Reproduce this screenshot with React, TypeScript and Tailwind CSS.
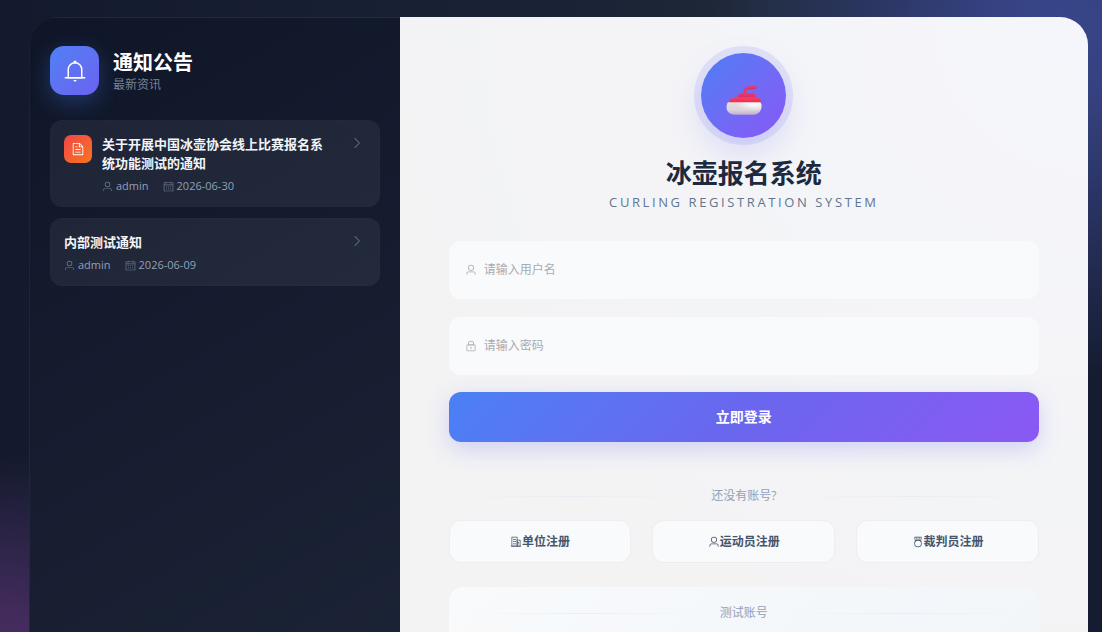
import type { ReactNode } from "react";

type IconProps = { className?: string };

function Icon({ className, children }: IconProps & { children: ReactNode }) {
  return (
    <svg viewBox="0 0 1024 1024" fill="currentColor" className={className} aria-hidden="true">
      {children}
    </svg>
  );
}

function BellIcon({ className }: IconProps) {
  return (
    <Icon className={className}>
      <path d="M512 64a64 64 0 0 1 64 64v64H448v-64a64 64 0 0 1 64-64z" />
      <path d="M256 768h512V448a256 256 0 1 0-512 0v320zm256-640a320 320 0 0 1 320 320v384H192V448a320 320 0 0 1 320-320z" />
      <path d="M96 768h832q32 0 32 32t-32 32H96q-32 0-32-32t32-32zm352 128h128a64 64 0 0 1-128 0z" />
    </Icon>
  );
}

function UserIcon({ className }: IconProps) {
  return (
    <Icon className={className}>
      <path d="M512 512a192 192 0 1 0 0-384 192 192 0 0 0 0 384zm0 64a256 256 0 1 1 0-512 256 256 0 0 1 0 512zm320 320v-96a96 96 0 0 0-96-96H288a96 96 0 0 0-96 96v96a32 32 0 1 1-64 0v-96a160 160 0 0 1 160-160h448a160 160 0 0 1 160 160v96a32 32 0 1 1-64 0z" />
    </Icon>
  );
}

function LockIcon({ className }: IconProps) {
  return (
    <Icon className={className}>
      <path d="M224 448a32 32 0 0 0-32 32v384a32 32 0 0 0 32 32h576a32 32 0 0 0 32-32V480a32 32 0 0 0-32-32H224zm0-64h576a96 96 0 0 1 96 96v384a96 96 0 0 1-96 96H224a96 96 0 0 1-96-96V480a96 96 0 0 1 96-96z" />
      <path d="M512 544a32 32 0 0 1 32 32v192a32 32 0 1 1-64 0V576a32 32 0 0 1 32-32zm192-160v-64a192 192 0 1 0-384 0v64h384zM512 64a256 256 0 0 1 256 256v128H256V320A256 256 0 0 1 512 64z" />
    </Icon>
  );
}

function CalendarIcon({ className }: IconProps) {
  return (
    <Icon className={className}>
      <path d="M128 384v512h768V192H768v32a32 32 0 1 1-64 0v-32H320v32a32 32 0 0 1-64 0v-32H128v128h768v64H128zm192-256h384V96a32 32 0 1 1 64 0v32h160a32 32 0 0 1 32 32v768a32 32 0 0 1-32 32H96a32 32 0 0 1-32-32V160a32 32 0 0 1 32-32h160V96a32 32 0 0 1 64 0v32zm-32 384h64a32 32 0 0 1 0 64h-64a32 32 0 0 1 0-64zm0 192h64a32 32 0 1 1 0 64h-64a32 32 0 1 1 0-64zm192-192h64a32 32 0 0 1 0 64h-64a32 32 0 0 1 0-64zm0 192h64a32 32 0 1 1 0 64h-64a32 32 0 1 1 0-64zm192-192h64a32 32 0 1 1 0 64h-64a32 32 0 1 1 0-64zm0 192h64a32 32 0 1 1 0 64h-64a32 32 0 1 1 0-64z" />
    </Icon>
  );
}

function DocumentIcon({ className }: IconProps) {
  return (
    <Icon className={className}>
      <path d="M832 384H576V128H192v768h640V384zm-26.496-64L640 154.496V320h165.504zM160 64h480l256 256v608a32 32 0 0 1-32 32H160a32 32 0 0 1-32-32V96a32 32 0 0 1 32-32zm160 448h384v64H320v-64zm0-192h160v64H320v-64zm0 384h384v64H320v-64z" />
    </Icon>
  );
}

function OfficeIcon({ className }: IconProps) {
  return (
    <Icon className={className}>
      <path d="M192 128v704h384V128H192zm-32-64h448a32 32 0 0 1 32 32v768a32 32 0 0 1-32 32H160a32 32 0 0 1-32-32V96a32 32 0 0 1 32-32z" />
      <path d="M256 256h256v64H256v-64zm0 192h256v64H256v-64zm0 192h256v64H256v-64zm384-128h128v64H640v-64zm0 128h128v64H640v-64zM64 832h896v64H64v-64z" />
      <path d="M640 384v448h192V384H640zm-32-64h256a32 32 0 0 1 32 32v512a32 32 0 0 1-32 32H608a32 32 0 0 1-32-32V352a32 32 0 0 1 32-32z" />
    </Icon>
  );
}

function MedalIcon({ className }: IconProps) {
  return (
    <Icon className={className}>
      <path d="M512 896a256 256 0 1 0 0-512 256 256 0 0 0 0 512zm0 64a320 320 0 1 1 0-640 320 320 0 0 1 0 640z" />
      <path d="M576 128H448v200a286.72 286.72 0 0 1 64-8c19.52 0 40.832 2.688 64 8V128zm64 0v219.648c24.448 9.088 50.56 20.416 78.4 33.92L757.44 128H640zm-256 0H266.624l39.04 253.568c27.84-13.504 53.888-24.832 78.336-33.92V128zM229.312 64h565.376a32 32 0 0 1 31.616 36.864L768 480c-113.792-64-199.104-96-256-96-56.896 0-142.208 32-256 96l-58.304-379.136A32 32 0 0 1 229.312 64z" />
    </Icon>
  );
}

function ArrowRightIcon({ className }: IconProps) {
  return (
    <Icon className={className}>
      <path d="M340.864 149.312a30.592 30.592 0 0 0 0 42.752L652.736 512 340.864 831.872a30.592 30.592 0 0 0 0 42.752 29.12 29.12 0 0 0 41.728 0L714.24 534.336a32 32 0 0 0 0-44.672L382.592 149.376a29.12 29.12 0 0 0-41.728 0z" />
    </Icon>
  );
}

function CurlingStone({ className }: IconProps) {
  return (
    <svg viewBox="0 0 36 32" className={className} aria-hidden="true">
      <defs>
        <linearGradient id="stone" x1="0" y1="0" x2="0" y2="1">
          <stop offset="0" stopColor="#e6dfe4" />
          <stop offset="0.65" stopColor="#ddd3dc" />
          <stop offset="1" stopColor="#c0aecd" />
        </linearGradient>
        <radialGradient id="shine" cx="0.78" cy="0.2" r="0.5">
          <stop offset="0" stopColor="#ffffff" />
          <stop offset="1" stopColor="#ffffff" stopOpacity="0" />
        </radialGradient>
        <linearGradient id="cap" x1="0" y1="0" x2="0" y2="1">
          <stop offset="0" stopColor="#e5336a" />
          <stop offset="0.5" stopColor="#f43c62" />
          <stop offset="1" stopColor="#ee3050" />
        </linearGradient>
      </defs>
      <path d="M2.8 17.5h30.4c1.6 1 2.3 2.3 2.3 4.2 0 5.4-3.2 9-8.3 9H8.8c-5.1 0-8.3-3.2-8.3-7.4 0-2.7.7-4.6 2.3-5.8z" fill="url(#stone)" />
      <path d="M2.8 17.5h30.4c1.6 1 2.3 2.3 2.3 4.2 0 5.4-3.2 9-8.3 9H8.8c-5.1 0-8.3-3.2-8.3-7.4 0-2.7.7-4.6 2.3-5.8z" fill="url(#shine)" />
      <path d="M2.2 18.2C3 15.6 6 14.2 10.5 13l2.2-2.6c.5-.7 1-.9 1.8-.9h13.2c.9 0 1.4.3 1.7 1.2l.7 2.3c3.2.9 5 2.5 5.2 5.2z" fill="url(#cap)" />
      <path d="M12.6 12.2h16.4" stroke="#cf2b68" strokeWidth="0.8" />
      <path d="M18.4 10l1-4c.4-1.5 1.3-2.1 2.8-2.2l7.2-.5" fill="none" stroke="#f0345f" strokeWidth="2.8" strokeLinecap="round" strokeLinejoin="round" />
      <path d="M22 5l8-.6" stroke="#cb2b6c" strokeWidth="0.7" strokeLinecap="round" />
    </svg>
  );
}

const notices = [
  { title: "关于开展中国冰壶协会线上比赛报名系统功能测试的通知", author: "admin", date: "2026-06-30", pinned: true },
  { title: "内部测试通知", author: "admin", date: "2026-06-09", pinned: false },
];

const registerLinks = [
  { icon: OfficeIcon, label: "单位注册" },
  { icon: UserIcon, label: "运动员注册" },
  { icon: MedalIcon, label: "裁判员注册" },
];

const fields = [
  { icon: UserIcon, name: "username", type: "text", placeholder: "请输入用户名" },
  { icon: LockIcon, name: "password", type: "password", placeholder: "请输入密码" },
];

function Divider({ children }: { children: ReactNode }) {
  return (
    <div className="flex items-center gap-4 text-xs leading-5 text-slate-400">
      <span className="h-px flex-1 bg-linear-to-r from-transparent via-slate-200/60 to-transparent" />
      {children}
      <span className="h-px flex-1 bg-linear-to-r from-transparent via-slate-200/60 to-transparent" />
    </div>
  );
}

function NoticePanel() {
  return (
    <aside className="w-[35%] shrink-0 rounded-tl-[28px] border-t border-l border-white/3 bg-linear-150 from-[#101628] to-[#1d2538] px-5 pt-7">
      <header className="flex items-center gap-3.5">
        <div className="flex size-[49px] items-center justify-center rounded-[14px] bg-linear-135 from-[#4f80f6] to-[#6a62ef] text-white shadow-[0_7px_21px_rgba(59,130,246,0.3)]">
          <BellIcon className="size-6" />
        </div>
        <div>
          <h2 className="text-xl leading-7 font-bold text-white">通知公告</h2>
          <p className="text-xs leading-4 text-slate-400/80">最新资讯</p>
        </div>
      </header>

      <ul className="mt-[25px] flex flex-col gap-[11px]">
        {notices.map((notice) => (
          <li key={notice.title}>
            <a href="#" className="flex items-start rounded-xl border border-white/1 bg-white/6 px-[13px] pt-3.5 pb-3">
              {notice.pinned && (
                <span className="mr-2.5 flex size-7 shrink-0 items-center justify-center rounded-[7px] bg-linear-135 from-[#ef4444] to-[#f97316] text-white">
                  <DocumentIcon className="size-3.5" />
                </span>
              )}
              <span className="min-w-0 flex-1">
                <span className="block text-[13px] leading-[19px] font-bold text-slate-100">{notice.title}</span>
                <span className="mt-[5px] flex items-center gap-3.5 text-[11px] leading-4 text-slate-400">
                  <span className="flex items-center gap-[3px]">
                    <UserIcon className="size-[11px] opacity-70" />
                    {notice.author}
                  </span>
                  <span className="flex items-center gap-[3px]">
                    <CalendarIcon className="size-[11px] opacity-70" />
                    {notice.date}
                  </span>
                </span>
              </span>
              <ArrowRightIcon className="mt-px mr-0.5 ml-4 size-3.5 shrink-0 text-slate-500" />
            </a>
          </li>
        ))}
      </ul>
    </aside>
  );
}

function LoginPanel() {
  return (
    <main className="flex-1 rounded-tr-[28px] bg-[#f3f4f6] bg-[radial-gradient(circle_at_100%_0%,#f5f6fb_0%,#f3f3f4_70%)] px-[49px] pt-9 pb-12">
      <header className="text-center">
        <div className="mx-auto flex size-[85px] items-center justify-center rounded-full bg-linear-135 from-[#4a7df5] to-[#8757f5] shadow-[0_0_0_7px_rgba(99,102,241,0.13),0_14px_35px_rgba(99,102,241,0.2)]">
          <CurlingStone className="mt-2 h-8 w-9" />
        </div>
        <h1 className="mt-[17px] text-[26px] leading-9 font-bold text-slate-800">冰壶报名系统</h1>
        <p className="text-[13px] leading-[22px] tracking-[0.2em] text-slate-500">CURLING REGISTRATION SYSTEM</p>
      </header>

      <form className="mt-7" onSubmit={(e) => e.preventDefault()}>
        <div className="flex flex-col gap-[18px]">
          {fields.map((field) => (
            <label key={field.name} className="flex h-[58px] items-center gap-[7px] rounded-xl bg-[#f9fafc] px-4 text-[#a8abb2]">
              <field.icon className="size-3" />
              <input
                name={field.name}
                type={field.type}
                placeholder={field.placeholder}
                aria-label={field.placeholder}
                className="min-w-0 flex-1 bg-transparent text-xs text-slate-700 outline-none placeholder:text-[#a8abb2]"
              />
            </label>
          ))}
        </div>
        <button
          type="submit"
          className="mt-[17px] h-[50px] w-full rounded-xl bg-linear-135 from-[#4980f5] via-[#6a66ee] to-[#8b58f4] text-sm font-bold text-white shadow-[0_7px_22px_rgba(99,102,241,0.25)]"
        >
          立即登录
        </button>
      </form>

      <section className="mt-11">
        <Divider>还没有账号?</Divider>
        <div className="mt-3.5 grid grid-cols-3 gap-[21px]">
          {registerLinks.map((item) => (
            <button
              key={item.label}
              type="button"
              className="flex h-[43px] items-center justify-center rounded-xl border border-[#eceef1] bg-[#f9fafb] text-xs font-bold text-slate-600"
            >
              <item.icon className="size-3" />
              {item.label}
            </button>
          ))}
        </div>
      </section>

      <section className="mt-6 h-40 rounded-[14px] bg-linear-135 from-[#f8fafc] to-[#f1f5f9] px-6 pt-4">
        <Divider>测试账号</Divider>
      </section>
    </main>
  );
}

export default function App() {
  return (
    <div className="h-screen overflow-hidden bg-[#161d31] bg-[radial-gradient(circle_at_96%_4%,#38468a_0px,#35417f_80px,transparent_350px),radial-gradient(circle_at_0%_110%,#4b2f66_0px,#432c5d_80px,transparent_240px),linear-gradient(90deg,#131a2d_0%,#1a2236_50%,#1f2937_70%,#151c31_100%)] pt-[17px] pr-3.5 pl-[29px] font-['Open_Sans','Noto_Sans_CJK_SC',sans-serif]">
      <div className="flex rounded-t-[28px]">
        <NoticePanel />
        <LoginPanel />
      </div>
    </div>
  );
}
